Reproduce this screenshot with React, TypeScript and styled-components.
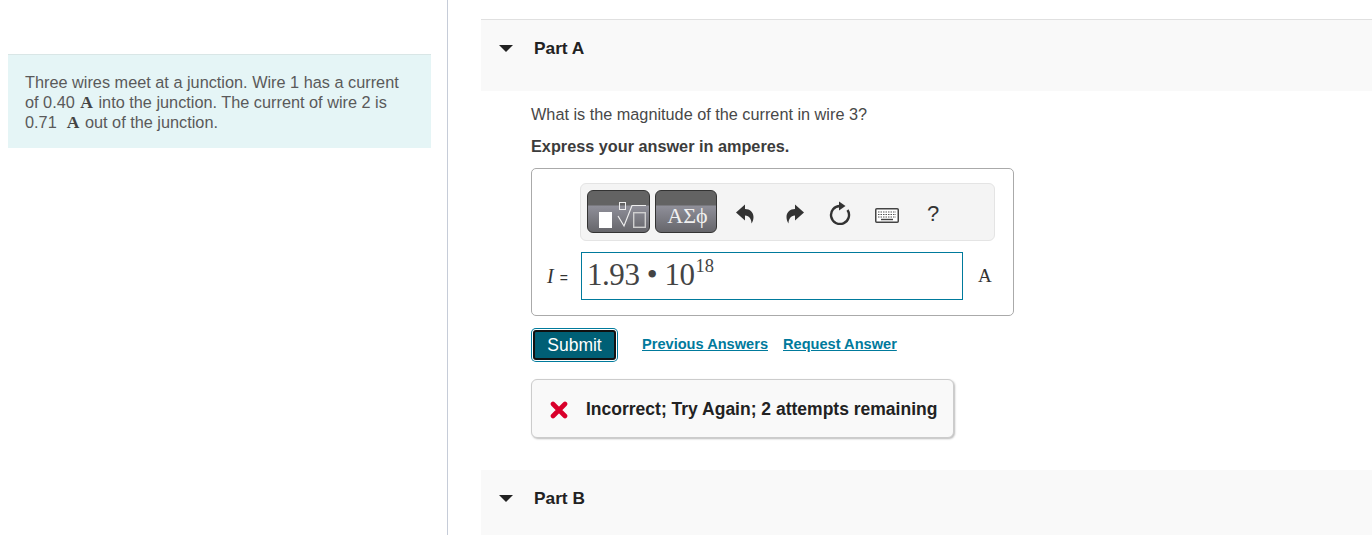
import { FC } from "react";
import styled, { createGlobalStyle } from "styled-components";

const GlobalStyle = createGlobalStyle`
    html, body {
        margin: 0;
        padding: 0;
        background: #fff;
        height: 535px;
        overflow: hidden;
    }
    body {
        font-family: "Liberation Sans", Arial, sans-serif;
    }
`

const UndoIcon: FC<{ flip?: boolean }> = ({ flip }) => (
    <ArrowSvg $flip={flip} width="18" height="20" viewBox="0 0 18 20">
        <path d="M0 8.5 L9 0.5 V5 C14 5 17.5 8.5 17.5 13 C17.5 16 16.5 18 15.5 19.5 C15.5 15.5 13.5 11.5 9 11.5 V16.5 Z" fill="#333" />
    </ArrowSvg>
)

const RefreshIcon: FC = () => (
    <NudgedSvg $top={-2} width="22" height="24" viewBox="0 0 22 24">
        <path d="M11 5 A9 9 0 1 0 18.5 9" fill="none" stroke="#333" strokeWidth="2.4" />
        <path d="M10 0.5 L16.5 5 L10 9.5 Z" fill="#333" />
    </NudgedSvg>
)

const KeyboardIcon: FC = () => (
    <NudgedSvg $top={3} width="24" height="15" viewBox="0 0 24 15">
        <rect x="0.75" y="0.75" width="22.5" height="13.5" rx="1" fill="#fff" stroke="#444" strokeWidth="1.5" />
        <path d="M3 4 H21 M3 6.5 H21 M3 9 H21" stroke="#555" strokeWidth="1.2" strokeDasharray="1.5 1" />
        <path d="M6 11.5 H18" stroke="#444" strokeWidth="1.4" />
    </NudgedSvg>
)

const CrossIcon: FC = () => (
    <svg width="18" height="18" viewBox="0 0 18 18">
        <path d="M3 3 L15 15 M15 3 L3 15" stroke="#d9002b" strokeWidth="4.6" strokeLinecap="round" />
    </svg>
)

const TemplateIcon: FC = () => (
    <svg width="63" height="43" viewBox="0 0 63 43">
        <rect x="12" y="22" width="13" height="16" fill="#fff" />
        <rect x="32.5" y="12.5" width="6" height="7" fill="none" stroke="#eee" strokeWidth="1" />
        <path d="M31 26 L37 36 L45 15.5 H59" fill="none" stroke="#eee" strokeWidth="1.2" />
        <rect x="46.7" y="22.7" width="11.6" height="14.6" fill="none" stroke="#cfcfcf" strokeWidth="1.4" />
    </svg>
)

const App: FC = () => (
    <Page>
        <GlobalStyle />
        <LeftColumn>
            <Intro>
                Three wires meet at a junction. Wire 1 has a current of 0.40 <Unit>A</Unit> into the junction. The current of wire 2 is 0.71&nbsp;&nbsp;<Unit>A</Unit> out of the junction.
            </Intro>
        </LeftColumn>
        <RightColumn>
            <PartHeader bordered height={72}>
                <Caret />
                <PartTitle>Part A</PartTitle>
            </PartHeader>
            <PartBody>
                <Question>What is the magnitude of the current in wire 3?</Question>
                <Instruction>Express your answer in amperes.</Instruction>
                <AnswerBox>
                    <Toolbar>
                        <PaletteButton width={63}><TemplateIcon /></PaletteButton>
                        <PaletteButton width={62}><Greek>ΑΣϕ</Greek></PaletteButton>
                        <ToolSlot width={46}><UndoIcon /></ToolSlot>
                        <ToolSlot width={54}><UndoIcon flip /></ToolSlot>
                        <ToolSlot width={36}><RefreshIcon /></ToolSlot>
                        <ToolSlot width={58}><KeyboardIcon /></ToolSlot>
                        <ToolSlot width={34}><Help>?</Help></ToolSlot>
                    </Toolbar>
                    <InputRow>
                        <VarLabel><i>I</i><small>=</small></VarLabel>
                        <AnswerInput>1.93 • 10<sup>18</sup></AnswerInput>
                        <UnitLabel>A</UnitLabel>
                    </InputRow>
                </AnswerBox>
                <ActionRow>
                    <SubmitButton>Submit</SubmitButton>
                    <ActionLink>Previous Answers</ActionLink>
                    <ActionLink>Request Answer</ActionLink>
                </ActionRow>
                <Feedback>
                    <CrossIcon />
                    <span>Incorrect; Try Again; 2 attempts remaining</span>
                </Feedback>
            </PartBody>
            <PartHeader height={65}>
                <Caret />
                <PartTitle>Part B</PartTitle>
            </PartHeader>
        </RightColumn>
    </Page>
)

export default App

const ArrowSvg = styled.svg<{ $flip?: boolean }>`
    transform: ${p => (p.$flip ? "scaleX(-1)" : "none")};
`

const NudgedSvg = styled.svg<{ $top: number }>`
    margin-top: ${p => p.$top}px;
`

const Page = styled.div`
    display: flex;
    width: 1372px;
    height: 535px;
    overflow: hidden;
`

const LeftColumn = styled.div`
    width: 439px;
    height: 535px;
    box-sizing: content-box;
    padding: 54px 0 0 8px;
    border-right: 1px solid #c6ccd8;
`

const Intro = styled.div`
    width: 423px;
    height: 94px;
    box-sizing: border-box;
    background: #e5f5f6;
    border-top: 1px solid #d9e6e6;
    padding: 17px 26px 0 17px;
    font-size: 16.3px;
    line-height: 20px;
    color: #5a5a5a;
`

const Unit = styled.span`
    margin: 0 1px;
    font-family: "Liberation Serif", "Times New Roman", serif;
    font-weight: bold;
    font-size: 17.5px;
    color: #444;
`

const RightColumn = styled.div`
    flex: 1;
    padding: 19px 0 0 33px;
`

const PartHeader = styled.div<{ bordered?: boolean; height: number }>`
    display: flex;
    align-items: flex-start;
    height: ${p => p.height}px;
    box-sizing: border-box;
    background: #f9f9f9;
    border-top: ${p => (p.bordered ? "1px solid #e0e0e0" : "0")};
    padding: 19px 0 0 18px;
`

const Caret = styled.span`
    width: 0;
    height: 0;
    margin-top: 6px;
    border-left: 7px solid transparent;
    border-right: 7px solid transparent;
    border-top: 7px solid #222;
`

const PartTitle = styled.span`
    margin-left: 21px;
    font-size: 17.3px;
    line-height: 18px;
    font-weight: bold;
    color: #222;
`

const PartBody = styled.div`
    padding: 13px 0 0 50px;
    height: 379px;
    box-sizing: border-box;
`

const Question = styled.div`
    font-size: 16.25px;
    line-height: 20px;
    color: #484848;
`

const Instruction = styled.div`
    margin-top: 12px;
    font-size: 16.25px;
    line-height: 20px;
    font-weight: bold;
    color: #3c3c3c;
`

const AnswerBox = styled.div`
    width: 483px;
    height: 148px;
    box-sizing: border-box;
    margin-top: 12px;
    border: 1px solid #aaa;
    border-radius: 5px;
    padding: 14px 0 0 48px;
`

const Toolbar = styled.div`
    display: flex;
    align-items: flex-start;
    width: 415px;
    height: 58px;
    box-sizing: border-box;
    background: #f4f4f4;
    border: 1px solid #e4e4e4;
    border-radius: 6px;
    padding: 6px 0 0 6px;
`

const PaletteButton = styled.div<{ width: number }>`
    display: flex;
    align-items: center;
    justify-content: center;
    width: ${p => p.width}px;
    height: 43px;
    box-sizing: border-box;
    margin-right: 5px;
    border: 1px solid #333;
    border-radius: 6px;
    overflow: hidden;
    background: linear-gradient(to bottom, #636363 0, #636363 14px, #8f8f99 15px, #66666b 100%);
    svg { margin: -1px; flex: none; }
`

const Greek = styled.span`
    margin: 9px 0 0 3px;
    font-family: "Liberation Serif", "DejaVu Serif", serif;
    font-size: 22px;
    color: #f0f0f0;
`

const ToolSlot = styled.div<{ width: number }>`
    display: flex;
    align-items: center;
    justify-content: center;
    width: ${p => p.width}px;
    height: 43px;
    margin-top: 2px;
`

const Help = styled.span`
    font-size: 22px;
    color: #333;
`

const InputRow = styled.div`
    display: flex;
    align-items: center;
    height: 48px;
    margin: 11px 0 0 -33px;
`

const VarLabel = styled.div`
    width: 34px;
    font-family: "Liberation Serif", serif;
    font-size: 20px;
    color: #333;
    small { margin-left: 6px; font-family: "Liberation Sans", sans-serif; font-size: 14px; }
`

const AnswerInput = styled.div`
    width: 382px;
    height: 48px;
    box-sizing: border-box;
    border: 1px solid #007a9c;
    padding-left: 5px;
    font-family: "Liberation Serif", serif;
    font-size: 31px;
    letter-spacing: -0.45px;
    line-height: 44px;
    color: #444;
    sup { margin-left: 1px; font-size: 18.5px; letter-spacing: 0; line-height: 0; vertical-align: 13px; }
`

const UnitLabel = styled.div`
    margin-left: 15px;
    font-family: "Liberation Serif", serif;
    font-size: 19px;
    color: #333;
`

const ActionRow = styled.div`
    display: flex;
    align-items: center;
    margin-top: 12px;
`

const SubmitButton = styled.div`
    width: 83px;
    height: 30px;
    box-sizing: border-box;
    margin: 2px;
    display: flex;
    align-items: center;
    justify-content: center;
    background: #005f75;
    border: 2px solid #111;
    border-radius: 3px;
    box-shadow: 0 0 0 1px #fff, 0 0 0 2px #007a9c;
    font-size: 17.5px;
    color: #fff;
`

const ActionLink = styled.span`
    margin: -2px 0 0 15px;
    font-size: 14.6px;
    font-weight: bold;
    color: #007a9c;
    text-decoration: underline;
    &:first-of-type { margin-left: 24px; }
`

const Feedback = styled.div`
    display: flex;
    align-items: center;
    gap: 18px;
    width: 423px;
    height: 59px;
    box-sizing: border-box;
    margin-top: 17px;
    padding: 2px 0 0 18px;
    background: #f9f9f9;
    border: 1px solid #ccc;
    border-radius: 6px;
    box-shadow: 1px 1px 2px #bbb;
    font-size: 17.5px;
    font-weight: bold;
    color: #222;
    white-space: nowrap;
`
